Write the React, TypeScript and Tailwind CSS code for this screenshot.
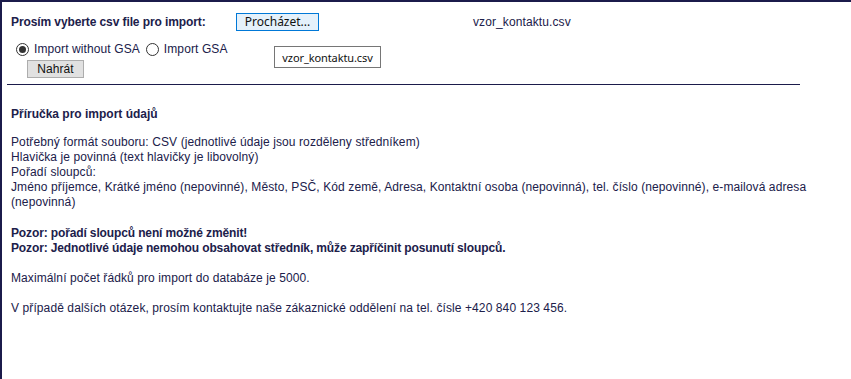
import React from "react";

const Radio: React.FunctionComponent<{ checked?: boolean; label: string }> = ({ checked, label }) => (
    <label className="flex items-center">
        <span className="w-[13px] h-[13px] rounded-full border border-[#333] bg-white flex items-center justify-center shrink-0">
            {checked && <span className="w-[7px] h-[7px] rounded-full bg-[#333]" />}
        </span>
        <span className="ml-[5px]">{label}</span>
    </label>
);

export default function App() {
    return (
        <div className="w-[851px] h-[379px] bg-white border-t-2 border-l-2 border-[#1b1b4b] text-[#20204a] text-[12px] leading-[15px] tracking-[0.1px] font-['Liberation_Sans',Arial,sans-serif] overflow-hidden">
            <div className="relative pl-[9px] pt-[11px]">
                <div className="flex items-center h-[18px]">
                    <span className="w-[225px] font-bold tracking-[-0.1px]">Prosím vyberte csv file pro import:</span>
                    <button className="w-[83px] h-[18px] bg-[#e5f1fb] border border-[#0078d7] text-[#111] text-[12px] tracking-normal font-['Noto_Sans',sans-serif] leading-none">
                        Procházet...
                    </button>
                    <span className="ml-[154px]">vzor_kontaktu.csv</span>
                </div>
                <div className="flex items-center gap-[6px] mt-[11px] ml-[5px] h-[15px]">
                    <Radio checked label="Import without GSA" />
                    <Radio label="Import GSA" />
                </div>
                <button className="mt-[3px] ml-[16px] w-[57px] h-[18px] bg-[#e1e1e1] border border-[#adadad] text-[#111] text-[12px] leading-none">
                    Nahrát
                </button>
                <div className="absolute left-[272px] top-[44px] w-[107px] h-[22px] bg-white border border-[#767676] text-[#111] font-['Noto_Sans',sans-serif] text-[11px] tracking-[-0.1px] flex items-center justify-center">
                    vzor_kontaktu.csv
                </div>
            </div>
            <div className="ml-[5px] mt-[6px] w-[793px] h-px bg-[#1b1b4b]" />
            <div className="pl-[9px] pr-[2px]">
                <p className="font-bold tracking-normal mt-[22px]">Příručka pro import údajů</p>
                <p className="mt-[13px]">
                    Potřebný formát souboru: CSV (jednotlivé údaje jsou rozděleny středníkem)
                    <br />
                    Hlavička je povinná (text hlavičky je libovolný)
                    <br />
                    Pořadí sloupců:
                    <br />
                    Jméno příjemce, Krátké jméno (nepovinné), Město, PSČ, Kód země, Adresa, Kontaktní osoba (nepovinná), tel. číslo (nepovinné), e-mailová adresa (nepovinná)
                </p>
                <p className="font-bold tracking-[-0.13px] mt-[16px]">
                    Pozor: pořadí sloupců není možné změnit!
                    <br />
                    Pozor: Jednotlivé údaje nemohou obsahovat středník, může zapříčinit posunutí sloupců.
                </p>
                <p className="mt-[15px]">Maximální počet řádků pro import do databáze je 5000.</p>
                <p className="mt-[15px]">V případě dalších otázek, prosím kontaktujte naše zákaznické oddělení na tel. čísle +420 840 123 456.</p>
            </div>
        </div>
    );
}
